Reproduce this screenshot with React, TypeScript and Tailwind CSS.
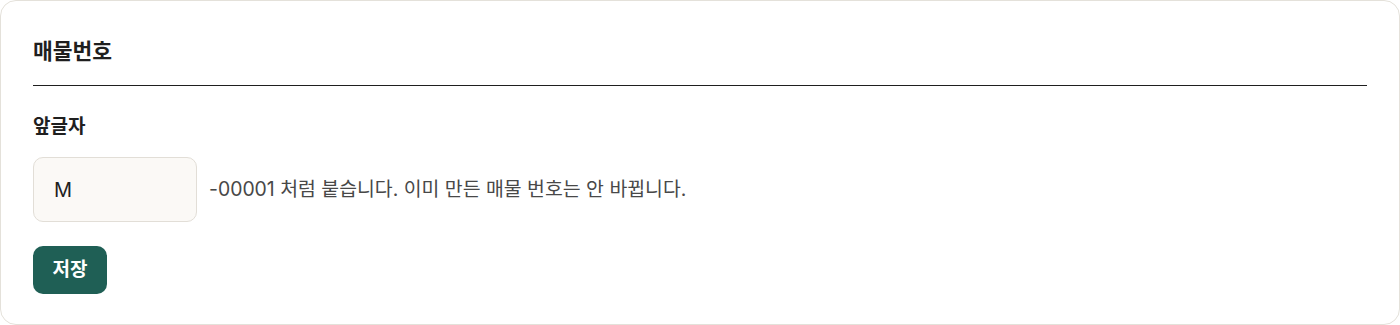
export default function App() {
  return (
    <div className="bg-white font-['Inter','Noto_Sans_CJK_KR',sans-serif]">
      <section className="h-[325px] rounded-2xl border border-[#e4e1da] bg-white px-8 pt-[34px]">
        <h2 className="text-[21.5px] font-bold leading-8 text-[#1f1f1f]">매물번호</h2>
        <div className="mt-[18px] h-px bg-[#1f1f1f]" />
        <div className="mt-[27px]">
          <label className="block text-[19px] font-bold leading-7 text-[#1f1f1f]">앞글자</label>
          <div className="mt-[16px] flex items-center gap-3">
            <input
              defaultValue="M"
              className="h-[65px] w-[164px] rounded-[10px] border border-[#e2ded7] bg-[#fbf9f6] px-5 text-[20px] text-[#1f1f1f] outline-none"
            />
            <p className="text-[19.4px] text-[#484848]">-00001 처럼 붙습니다. 이미 만든 매물 번호는 안 바뀝니다.</p>
          </div>
          <button className="mt-6 h-12 w-[74px] rounded-[10px] bg-[#1f5f55] text-[19px] font-bold text-white">저장</button>
        </div>
      </section>
    </div>
  )
}
